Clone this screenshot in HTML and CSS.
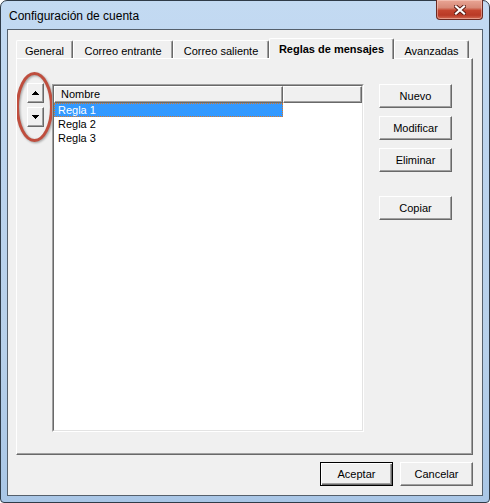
FILE: index.html
```html
<!DOCTYPE html>
<html>
<head>
<meta charset="utf-8">
<link rel="stylesheet" href="styles.css">
</head>
<body>
<div class="window">
  <div class="titlebar">
    <span class="title">Configuración de cuenta</span>
  </div>
  <div class="close">
    <svg width="12" height="10" viewBox="0 0 12 10">
      <path d="M2 1.5 L10 8.5 M10 1.5 L2 8.5" stroke="#5a1a12" stroke-width="4" stroke-linecap="square"/>
      <path d="M2 1.5 L10 8.5 M10 1.5 L2 8.5" stroke="#ffffff" stroke-width="2.2" stroke-linecap="square"/>
    </svg>
  </div>
  <div class="client">
    <div class="tabs">
      <div class="tab t1">General</div>
      <div class="tab t2">Correo entrante</div>
      <div class="tab t3">Correo saliente</div>
      <div class="tab t4 active">Reglas de mensajes</div>
      <div class="tab t5">Avanzadas</div>
    </div>
    <div class="panel">
      <div class="updown">
        <div class="sbtn">
          <svg width="7" height="4" viewBox="0 0 7 4" shape-rendering="crispEdges"><rect x="3" y="0" width="1" height="1"/><rect x="2" y="1" width="3" height="1"/><rect x="1" y="2" width="5" height="1"/><rect x="0" y="3" width="7" height="1"/></svg>
        </div>
        <div class="sbtn">
          <svg width="7" height="4" viewBox="0 0 7 4" shape-rendering="crispEdges"><rect x="0" y="0" width="7" height="1"/><rect x="1" y="1" width="5" height="1"/><rect x="2" y="2" width="3" height="1"/><rect x="3" y="3" width="1" height="1"/></svg>
        </div>
      </div>
      <div class="list">
        <div class="list-inner">
          <div class="hdr">
            <div class="hcol c1">Nombre</div>
            <div class="hcol c2"></div>
          </div>
          <div class="row sel">Regla 1</div>
          <div class="row">Regla 2</div>
          <div class="row">Regla 3</div>
        </div>
      </div>
      <div class="actions">
        <div class="btn">Nuevo</div>
        <div class="btn">Modificar</div>
        <div class="btn">Eliminar</div>
        <div class="btn gap">Copiar</div>
      </div>
    </div>
    <div class="footer">
      <div class="btn fbtn default">Aceptar</div>
      <div class="btn fbtn">Cancelar</div>
    </div>
  </div>
  <svg class="mark" width="42" height="76" viewBox="0 0 42 76">
    <ellipse cx="20.5" cy="37" rx="17" ry="33.5" fill="none" stroke="#bf4e3e" stroke-width="3"/>
  </svg>
</div>
</body>
</html>
```

FILE: styles.css
```css
html, body {
  margin: 0;
  padding: 0;
  background: #ffffff;
}

body {
  font-family: "Liberation Sans", Arial, sans-serif;
  font-size: 11px;
  color: #000;
}

.window {
  position: relative;
  width: 490px;
  height: 503px;
  box-sizing: border-box;
  border: 1px solid #2f3b48;
  border-radius: 7px 7px 4px 4px;
  background: linear-gradient(180deg, #c3daf2 0%, #bcd4ee 30%, #b7d0ea 70%, #a9c6e6 100%);
  display: flex;
  flex-direction: column;
  padding: 0 6px 6px 6px;
}

.titlebar {
  height: 28px;
  display: flex;
  align-items: center;
  padding-left: 2px;
  padding-top: 1px;
  box-sizing: border-box;
}

.title {
  font-family: "Liberation Sans", Arial, sans-serif;
  font-size: 12px;
  color: #000;
}

.close {
  position: absolute;
  left: 435px;
  top: -1px;
  width: 47px;
  height: 20px;
  box-sizing: border-box;
  border: 1px solid #6b2a22;
  border-top: none;
  border-radius: 0 0 4px 4px;
  background: linear-gradient(180deg, #e9a595 0%, #d88a78 40%, #c4452f 55%, #b93a26 80%, #d46c55 100%);
  box-shadow: inset 0 0 0 1px rgba(255, 220, 210, 0.45);
  display: flex;
  align-items: center;
  justify-content: center;
}

.client {
  flex: 1;
  border: 1px solid #55606c;
  background: #f0f0f0;
  display: flex;
  flex-direction: column;
}

.tabs {
  position: relative;
  z-index: 2;
  display: flex;
  align-items: flex-end;
  height: 20px;
  margin: 8px 0 0 8px;
}

.tab {
  height: 18px;
  box-sizing: border-box;
  border-top: 1px solid #ffffff;
  border-left: 1px solid #ffffff;
  border-right: 1px solid #696969;
  box-shadow: inset -1px 0 #a0a0a0;
  border-radius: 2px 2px 0 0;
  background: #f0f0f0;
  display: flex;
  align-items: center;
  justify-content: center;
  padding-top: 2px;
}

.t1 { width: 57px; }
.t2 { width: 100px; }
.t3 { width: 96px; }
.t4 { width: 125px; }
.t5 { width: 75px; }

.tab.active {
  height: 21px;
  margin-bottom: -1px;
  font-weight: bold;
  padding-top: 0;
}

.panel {
  position: relative;
  z-index: 1;
  width: 457px;
  height: 397px;
  box-sizing: border-box;
  margin-left: 8px;
  border-top: 1px solid #ffffff;
  border-left: 1px solid #ffffff;
  border-right: 1px solid #696969;
  border-bottom: 1px solid #696969;
  box-shadow: inset -1px -1px #a0a0a0;
  display: flex;
  align-items: flex-start;
  padding: 25px 0 0 10px;
}

.updown {
  display: flex;
  flex-direction: column;
  gap: 4px;
  width: 17px;
  margin-top: -1px;
}

.sbtn {
  height: 20px;
  box-sizing: border-box;
  border-top: 1px solid #ffffff;
  border-left: 1px solid #ffffff;
  border-right: 1px solid #696969;
  border-bottom: 1px solid #696969;
  box-shadow: inset -1px -1px #a0a0a0;
  background: #f0f0f0;
  display: flex;
  align-items: center;
  justify-content: center;
}

.sbtn svg {
  fill: #000;
  display: block;
}

.list {
  margin-left: 8px;
  width: 312px;
  height: 348px;
  box-sizing: border-box;
  border: 1px solid;
  border-color: #a0a0a0 #ffffff #ffffff #a0a0a0;
}

.list-inner {
  height: 100%;
  box-sizing: border-box;
  border: 1px solid;
  border-color: #696969 #e3e3e3 #e3e3e3 #696969;
  background: #ffffff;
}

.hdr {
  display: flex;
  height: 17px;
}

.hcol {
  box-sizing: border-box;
  height: 17px;
  border-top: 1px solid #ffffff;
  border-left: 1px solid #ffffff;
  border-right: 1px solid #696969;
  border-bottom: 1px solid #696969;
  box-shadow: inset -1px -1px #a0a0a0;
  background: #f0f0f0;
  padding-left: 6px;
  line-height: 14px;
}

.c1 { width: 229px; }
.c2 { flex: 1; }

.row {
  width: 229px;
  height: 14px;
  line-height: 14px;
  box-sizing: border-box;
  padding-left: 4px;
}

.row.sel {
  background: #3399ff;
  color: #ffffff;
  outline: 1px dotted #d9782a;
  outline-offset: -1px;
}

.actions {
  margin-left: 15px;
  width: 73px;
  display: flex;
  flex-direction: column;
  gap: 8px;
}

.btn {
  height: 24px;
  box-sizing: border-box;
  border-top: 1px solid #ffffff;
  border-left: 1px solid #ffffff;
  border-right: 1px solid #696969;
  border-bottom: 1px solid #696969;
  box-shadow: inset -1px -1px #a0a0a0;
  background: #f0f0f0;
  display: flex;
  align-items: center;
  justify-content: center;
}

.btn.gap {
  margin-top: 16px;
}

.footer {
  display: flex;
  justify-content: flex-end;
  gap: 7px;
  margin: 7px 9px 0 0;
}

.fbtn {
  width: 73px;
  height: 24px;
}

.btn.default {
  border: 1px solid #000000;
  box-shadow: inset 1px 1px #ffffff, inset -1px -1px #696969, inset -2px -2px #a0a0a0;
}

.mark {
  position: absolute;
  left: 13px;
  top: 69px;
  filter: drop-shadow(1px 1px 1px rgba(0, 0, 0, 0.35));
}
```
